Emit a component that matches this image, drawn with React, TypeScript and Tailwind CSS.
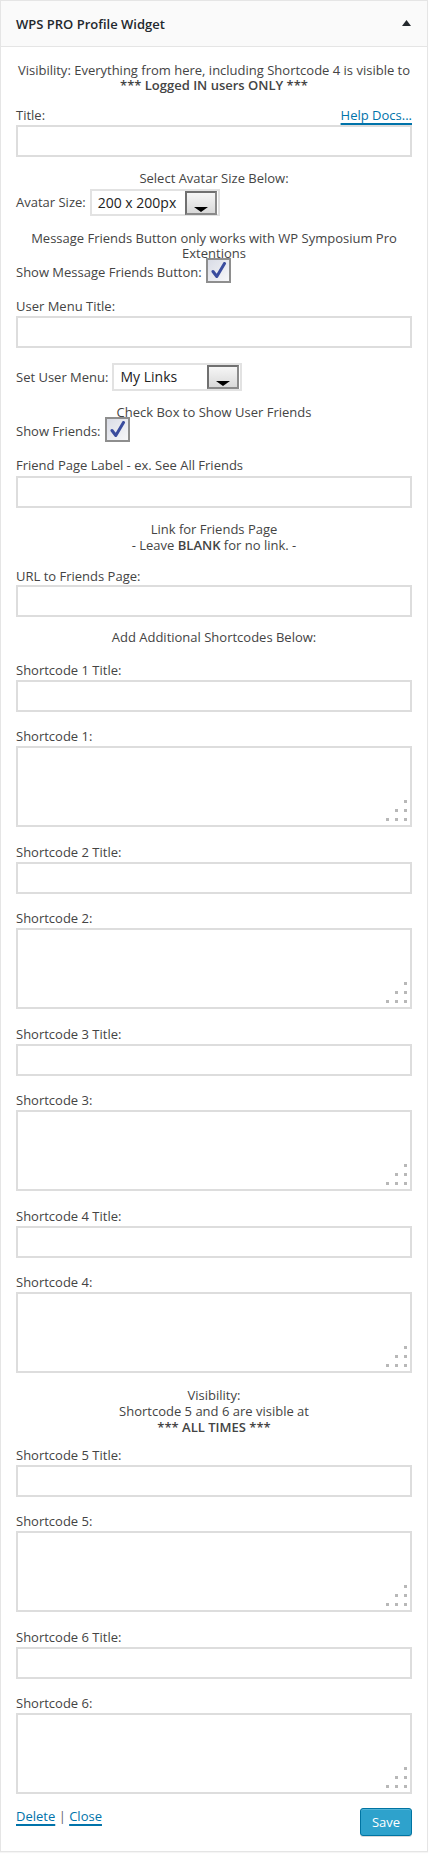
import React from "react";

function TextInput({ className = "" }: { className?: string }) {
  return (
    <input
      type="text"
      className={`block w-full h-[32px] border-2 border-[#dddddd] bg-white outline-none ${className}`}
    />
  );
}

function TextArea({ className = "" }: { className?: string }) {
  return (
    <div className={`relative h-[81px] w-full border-2 border-[#dddddd] bg-white ${className}`}>
      <svg
        className="absolute right-[3px] bottom-[4px]"
        width="21"
        height="21"
        viewBox="0 0 21 21"
      >
        <rect x="18" y="0" width="3" height="3" fill="#b8b8b8" />
        <rect x="9" y="9" width="3" height="3" fill="#b8b8b8" />
        <rect x="18" y="9" width="3" height="3" fill="#b8b8b8" />
        <rect x="0" y="18" width="3" height="3" fill="#b8b8b8" />
        <rect x="9" y="18" width="3" height="3" fill="#b8b8b8" />
        <rect x="18" y="18" width="3" height="3" fill="#b8b8b8" />
      </svg>
    </div>
  );
}

function Select({ value, className = "" }: { value: string; className?: string }) {
  return (
    <div
      className={`flex h-[27px] w-[130px] items-center justify-between border-2 border-[#e2e2e2] bg-white pl-[6px] pr-[1px] ${className}`}
    >
      <span className="text-[14px] leading-[18px] text-[#222222]">{value}</span>
      <div className="relative flex h-[24px] w-[32px] items-end justify-center border-2 border-t-[#707070] border-l-[#707070] border-r-[#8a8a8a] border-b-[#8a8a8a] bg-gradient-to-b from-[#f6f6f6] to-[#d9d9d9] pb-[1px]">
        <svg width="14" height="5" viewBox="0 0 14 5">
          <polygon points="0,0 14,0 7,5" fill="#000000" />
        </svg>
      </div>
    </div>
  );
}

function CheckBox({ className = "" }: { className?: string }) {
  return (
    <div
      className={`flex h-[25px] w-[25px] items-center justify-center border-2 border-[#8e8e8e] bg-gradient-to-br from-[#d9dce6] to-[#f7f7f9] ${className}`}
    >
      <svg width="17" height="17" viewBox="0 0 17 17">
        <path
          d="M3 9.5 L6.8 14.5 L14.5 1.5"
          fill="none"
          stroke="#3a4c9e"
          strokeWidth="3"
          strokeLinecap="round"
          strokeLinejoin="round"
        />
      </svg>
    </div>
  );
}

function Label({ children, className = "" }: { children: React.ReactNode; className?: string }) {
  return <div className={`leading-[15px] ${className}`}>{children}</div>;
}

function ShortcodeGroup({ n }: { n: number }) {
  return (
    <div>
      <Label className="mt-[18px]">Shortcode {n} Title:</Label>
      <TextInput className="mt-[2px]" />
      <Label className="mt-[17px]">Shortcode {n}:</Label>
      <TextArea className="mt-[2px]" />
    </div>
  );
}

export default function App() {
  return (
    <div className="min-h-[1859px] bg-white font-['Open_Sans','Liberation_Sans',sans-serif] text-[13px] text-[#444444]">
      <div className="w-[428px] border border-[#e5e5e5] bg-white shadow-[0_1px_1px_rgba(0,0,0,0.04)]">
        <div className="flex h-[46px] items-center justify-between border-b border-[#e5e5e5] bg-[#fafafa] pl-[15px] pr-[16px]">
          <span className="text-[13px] font-semibold leading-[16px] text-[#23282d]">WPS PRO Profile Widget</span>
          <svg width="9" height="6" viewBox="0 0 9 6" className="mt-[-1px]">
            <polygon points="4.5,0 9,6 0,6" fill="#23282d" />
          </svg>
        </div>

        <div className="px-[15px] pt-[16px] pb-[15px]">
          <div className="text-center leading-[15px]">
            Visibility: Everything from here, including Shortcode 4 is visible to
            <br />
            <b className="font-semibold">*** Logged IN users ONLY ***</b>
          </div>

          <div className="mt-[15px] flex items-start justify-between leading-[15px]">
            <span>Title:</span>
            <a className="text-[#0073aa] underline decoration-2 underline-offset-[3px]">Help Docs...</a>
          </div>
          <TextInput className="mt-[2px]" />

          <Label className="mt-[14px] text-center">Select Avatar Size Below:</Label>
          <div className="mt-[3px] flex items-center">
            <span className="leading-[15px]">Avatar Size:</span>
            <Select value="200 x 200px" className="ml-[4px]" />
          </div>

          <div className="mt-[15px] text-center leading-[15px]">
            Message Friends Button only works with WP Symposium Pro
            <br />
            Extentions
          </div>
          <div className="mt-[-3px] flex items-end">
            <span className="mb-[3px] leading-[15px]">Show Message Friends Button:</span>
            <CheckBox className="ml-[4px]" />
          </div>

          <Label className="mt-[16px]">User Menu Title:</Label>
          <TextInput className="mt-[2px]" />

          <div className="mt-[15px] flex items-center">
            <span className="leading-[15px]">Set User Menu:</span>
            <Select value="My Links" className="ml-[4px] h-[28px]" />
          </div>

          <Label className="mt-[14px] text-center">Check Box to Show User Friends</Label>
          <div className="mt-[-3px] flex items-end">
            <span className="mb-[3px] leading-[15px]">Show Friends:</span>
            <CheckBox className="ml-[4px]" />
          </div>

          <Label className="mt-[16px]">Friend Page Label - ex. See All Friends</Label>
          <TextInput className="mt-[3px]" />

          <div className="mt-[13px] text-center leading-[16px]">
            Link for Friends Page
            <br />- Leave <b className="font-semibold">BLANK</b> for no link. -
          </div>

          <Label className="mt-[16px]">URL to Friends Page:</Label>
          <TextInput className="mt-[1px]" />

          <Label className="mt-[13px] text-center">Add Additional Shortcodes Below:</Label>

          <ShortcodeGroup n={1} />
          <ShortcodeGroup n={2} />
          <ShortcodeGroup n={3} />
          <ShortcodeGroup n={4} />

          <div className="mt-[14px] text-center leading-[16px]">
            Visibility:
            <br />
            Shortcode 5 and 6 are visible at
            <br />
            <b className="font-semibold">*** ALL TIMES ***</b>
          </div>

          <div className="-mt-[5px]">
            <ShortcodeGroup n={5} />
          </div>
          <ShortcodeGroup n={6} />

          <div className="mt-[14px] flex items-start justify-between">
            <div className="mt-[1px] leading-[15px]">
              <a className="text-[#0073aa] underline decoration-2 underline-offset-[3px]">Delete</a>
              <span className="text-[#666666]"> | </span>
              <a className="text-[#0073aa] underline decoration-2 underline-offset-[3px]">Close</a>
            </div>
            <button className="h-[28px] w-[52px] rounded-[3px] border border-[#0074a2] bg-[#2ea2cc] text-[13px] leading-[26px] text-white shadow-[inset_0_1px_0_rgba(120,200,230,0.5),0_1px_0_rgba(0,0,0,0.15)]">
              Save
            </button>
          </div>
        </div>
      </div>
    </div>
  );
}
